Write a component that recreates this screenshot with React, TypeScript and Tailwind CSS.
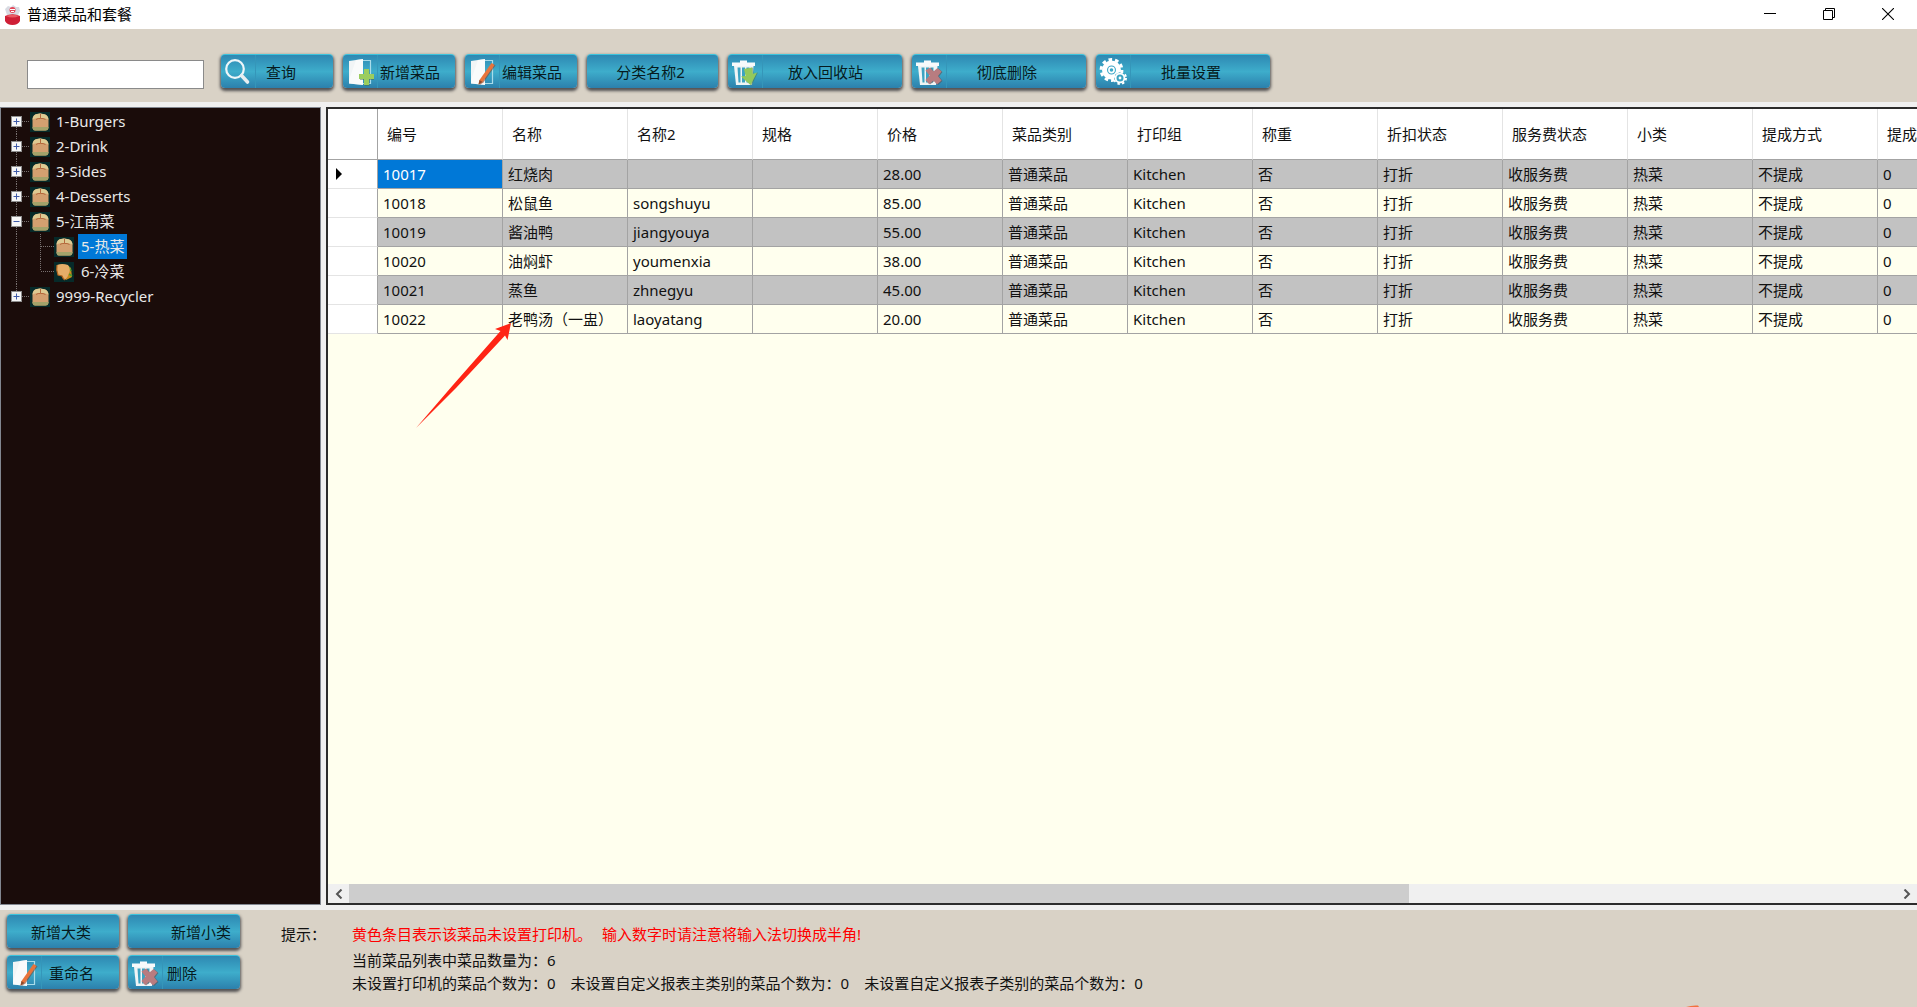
import React from "react";

type IconProps = { children?: React.ReactNode };

function Svg32({ children }: IconProps) {
  return (
    <svg viewBox="0 0 28 32" className="h-8 w-7 shrink-0" aria-hidden="true">
      {children}
    </svg>
  );
}

function SearchIcon() {
  return (
    <Svg32>
      <circle cx="11" cy="13" r="8.8" fill="none" stroke="#eef6f9" strokeWidth="2.2" />
      <path d="M17.5 19.5 L23.5 26" stroke="#e8eef1" strokeWidth="3.6" strokeLinecap="round" />
    </Svg32>
  );
}

function Page() {
  return (
    <>
      <path d="M17 4.5 H24.5 V27.5 H17" fill="none" stroke="#a9dcea" strokeWidth="1.2" />
      <path d="M3 5 L17 3 V29 L3 27.5 Z" fill="#f1f5f6" />
      <path d="M10 4 L17 3 V29 L3 27.5 V24 Z" fill="#fff" opacity=".6" />
    </>
  );
}

function AddIcon() {
  return (
    <Svg32>
      <Page />
      <path d="M18.5 14 h5 v5 h4.5 v5 h-4.5 v6 h-5 v-6 h-4.5 v-5 h4.5 Z" fill="#456e4a" opacity=".5" />
      <path d="M18 13 h5 v5 h5 v5 h-5 v6 h-5 v-6 h-5 v-5 h5 Z" fill="#9bcd5e" />
    </Svg32>
  );
}

function EditIcon() {
  return (
    <Svg32>
      <Page />
      <path d="M24.5 7.5 L27.5 9.5 L15.5 26.5 L11.5 29 L12.5 24.5 Z" fill="#7b4a35" opacity=".6" />
      <path d="M23.5 7 L26.5 9 L14.5 26 L10.5 28.5 L11.5 24 Z" fill="#e8743b" />
      <path d="M11.5 24 L14.5 26 L10.5 28.5 Z" fill="#8d4a2c" />
    </Svg32>
  );
}

function Can() {
  return (
    <>
      <path d="M1 6.5 H9 V4.5 H16 V6.5 H24 V10 H1 Z" fill="#f7fafb" />
      <path d="M3 10 H22.5 L21 29 H5 Z" fill="#f0f4f5" />
      <path d="M6.5 11.5 h3 v15 h-2 Z M11 11.5 h3 v15 h-3 Z M15.5 11.5 h3 l-.6 15 h-2.4 Z" fill="#3ca3c2" />
    </>
  );
}

function RecycleIcon() {
  return (
    <Svg32>
      <Can />
      <path d="M14 13 L22 11.5 L22.5 18 L27 16.5 L20.5 29.5 L11 21 L15.5 20.5 Z" fill="#4f7740" opacity=".5" />
      <path d="M13 13 L21 11.5 L21.5 18 L26 16.5 L19.5 29 L10 20.5 L14.5 20 Z" fill="#93c95c" />
    </Svg32>
  );
}

function DeleteIcon() {
  return (
    <Svg32>
      <Can />
      <path d="M11.5 15 l4.5-3 3.5 4 4-3.5 4 3.5-3.5 4.5 3.5 4.5-4.5 4-3.5-4-4.5 3.5-3.5-4 4-4.5 Z" fill="#5e4e52" opacity=".6" />
      <path d="M10.5 14.5 l4.5-3 3.5 4 4-3.5 4 3.5-3.5 4.5 3.5 4.5-4.5 4-3.5-4-4.5 3.5-3.5-4 4-4.5 Z" fill="#b87c80" />
    </Svg32>
  );
}

function GearsIcon() {
  return (
    <Svg32>
      <circle cx="12.5" cy="14" r="10.4" fill="none" stroke="#fff" strokeWidth="3" strokeDasharray="3.6 2.93" />
      <circle cx="12.5" cy="14" r="7" fill="none" stroke="#fff" strokeWidth="5" />
      <circle cx="12.5" cy="14" r="2.6" fill="none" stroke="#fff" strokeWidth="1.6" />
      <circle cx="21" cy="22" r="5.8" fill="#3ca3c2" />
      <circle cx="21" cy="22" r="6" fill="none" stroke="#fff" strokeWidth="2" strokeDasharray="2.4 2.31" />
      <circle cx="21" cy="22" r="4.4" fill="none" stroke="#fff" strokeWidth="1.8" />
      <circle cx="21" cy="22" r="1.4" fill="#fff" />
    </Svg32>
  );
}

function ActionButton({
  label,
  icon,
  width = "w-[112px]",
  place = "justify-center pr-1",
}: {
  label: string;
  icon?: React.ReactNode;
  width?: string;
  place?: string;
}) {
  return (
    <button
      type="button"
      className={`flex h-[34px] shrink-0 items-center rounded border-t border-[#3cc3dc] bg-linear-to-b from-[#2e88b2] via-[#3eadcb] to-[#2c80ac] leading-5 whitespace-nowrap text-[#061a20] shadow-[0_2px_3px_1px_rgba(40,40,45,0.75)] ${width} ${icon ? "" : place}`}
    >
      {icon ? (
        <>
          <span className="flex h-full w-[35px] shrink-0 items-center border-r border-[#3596b9] pl-[3px]">{icon}</span>
          <span className={place}>{label}</span>
        </>
      ) : (
        label
      )}
    </button>
  );
}

function BreadIcon() {
  return (
    <svg viewBox="0 0 20 20" className="size-5 shrink-0" aria-hidden="true">
      <rect width="20" height="20" fill="#062a29" />
      <path d="M2.500 7 Q3 2.500 7 2 Q10 .8 13 2 Q18 2.500 18.500 7 V16 Q18 18.500 15.500 18.500 H5 Q3 18.500 2.500 16 Z" fill="#d3a070" />
      <path d="M2.500 7.500 Q3 2.500 7 2 Q10 .8 13 2 Q18 2.500 18.500 7.500 Q14 5.500 10.500 6.500 Q6 5.500 2.500 7.500 Z" fill="#ddca92" />
      <path d="M10.500 2 V6.500 M6 7.500 Q8 6 10.500 6.500 Q13 6 15.500 7.500" fill="none" stroke="#b4683c" strokeWidth="1" />
      <path d="M2.500 15 H18.500 V16 Q18 18.500 15.500 18.500 H5 Q3 18.500 2.500 16 Z" fill="#a3a36a" />
    </svg>
  );
}

function SandwichIcon() {
  return (
    <svg viewBox="0 0 20 20" className="size-5 shrink-0" aria-hidden="true">
      <rect width="20" height="20" fill="#062a29" />
      <path d="M13 3 L17 6 L18 15 L12 18 Z" fill="#c98a1e" />
      <path d="M15 5 L17 9 M15 12 L18 14" stroke="#4f9a2c" strokeWidth="1.6" />
      <path d="M3 3 Q8 1 14 3 Q17 7 15 11 Q14 15 11 18 Q9 17 8 14 L4 13 Q2 8 3 3 Z" fill="#e5ad68" />
      <path d="M3 3 Q2 8 4 13 L8 14 Q9 17 11 18" fill="none" stroke="#b4651e" strokeWidth="1.2" />
    </svg>
  );
}

const DOT = { stroke: "#77706f", strokeDasharray: "1 1", strokeWidth: 1 };

function Expander({ open, first, last }: { open?: boolean; first?: boolean; last?: boolean }) {
  return (
    <svg viewBox="0 0 20 25" className="h-[25px] w-5" aria-hidden="true">
      <path d={`M6.5 ${first ? 12 : 0} V${last ? 12 : 25}`} {...DOT} />
      <path d="M12 12.5 H20" {...DOT} />
      <rect x="1.5" y="7.5" width="10" height="10" fill="#f6f6f6" stroke="#8f8f8f" />
      <path d={open ? "M3.500 12.500 H9.500" : "M3.500 12.500 H9.500 M6.500 9.500 V15.500"} stroke="#3f5aa8" />
    </svg>
  );
}

function TreeRow({ label, open, first, last }: { label: string; open?: boolean; first?: boolean; last?: boolean }) {
  return (
    <div className="flex h-[25px] items-center">
      <button type="button" aria-label={label} className="h-[25px] w-5">
        <Expander open={open} first={first} last={last} />
      </button>
      <BreadIcon />
      <span className="pl-1.5 leading-[25px]">{label}</span>
    </div>
  );
}

function ChildRow({ label, icon, selected, last }: { label: string; icon: React.ReactNode; selected?: boolean; last?: boolean }) {
  return (
    <li className="flex h-[25px] items-center">
      <svg viewBox="0 0 44 25" className="h-[25px] w-11 shrink-0" aria-hidden="true">
        <path d="M6.5 0 V25" {...DOT} />
        <path d={last ? "M30.5 0 V12" : "M30.5 0 V25"} {...DOT} />
        <path d="M31 12.5 H44" {...DOT} />
      </svg>
      {icon}
      <span className={selected ? "ml-1 bg-[#0078d7] px-[3px] leading-[25px]" : "ml-1 px-[3px] leading-[25px]"}>{label}</span>
    </li>
  );
}

const HEADERS = ["编号", "名称", "名称2", "规格", "价格", "菜品类别", "打印组", "称重", "折扣状态", "服务费状态", "小类", "提成方式", "提成"];

const DISHES = [
  ["10017", "红烧肉", "", "28.00"],
  ["10018", "松鼠鱼", "songshuyu", "85.00"],
  ["10019", "酱油鸭", "jiangyouya", "55.00"],
  ["10020", "油焖虾", "youmenxia", "38.00"],
  ["10021", "蒸鱼", "zhnegyu", "45.00"],
  ["10022", "老鸭汤（一盅）", "laoyatang", "20.00"],
];

const COMMON = ["普通菜品", "Kitchen", "否", "打折", "收服务费", "热菜", "不提成", "0"];

function DishTable() {
  return (
    <table className="w-[1675px] table-fixed border-separate border-spacing-0 text-left">
      <colgroup>
        <col className="w-[50px]" />
        {HEADERS.map((h) => (
          <col key={h} className="w-[125px]" />
        ))}
      </colgroup>
      <thead>
        <tr className="h-[51px] bg-white">
          <td className="border-r border-b border-[#a3a3a3]" />
          {HEADERS.map((h) => (
            <th key={h} scope="col" className="border-r border-b border-r-[#e4e4e4] border-b-[#a3a3a3] pl-[9px] font-normal whitespace-nowrap">
              {h}
            </th>
          ))}
        </tr>
      </thead>
      <tbody>
        {DISHES.map((dish, r) => (
          <tr key={dish[0]} className={r % 2 ? "h-[29px] bg-[#ffffee]" : "h-[29px] bg-[#c2c2c2]"}>
            <td className="border-r border-b border-r-[#a3a3a3] border-b-[#e4e4e4] bg-white pl-2">
              {r === 0 && (
                <svg viewBox="0 0 6 12" className="h-3 w-1.5" aria-hidden="true">
                  <path d="M0 0 L6 6 L0 12 Z" fill="#000" />
                </svg>
              )}
            </td>
            {[dish[0], dish[1], dish[2], "", dish[3], ...COMMON].map((text, c) => (
              <td
                key={c}
                className={`border-r border-b border-[#a3a3a3] pl-[5px] leading-5 whitespace-nowrap ${r === 0 && c === 0 ? "bg-[#0078d7] text-white" : ""}`}
              >
                {text}
              </td>
            ))}
          </tr>
        ))}
      </tbody>
    </table>
  );
}

function TitleBar() {
  return (
    <header className="flex h-[29px] shrink-0 items-center bg-white pl-1 text-black">
      <svg viewBox="0 0 17 20" className="h-5 w-[17px]" aria-hidden="true">
        <path d="M1 4 L4 1 L7 2 L9 0 L12 2 L15 2 L16 6 L14 10 H3 Z" fill="#d9dbe3" />
        <circle cx="8.5" cy="5" r="3" fill="#e5475a" />
        <path d="M6 4.500 h5 M7 6.500 h3" stroke="#fff" strokeWidth="1" />
        <path d="M1 11 Q8.5 7.500 16 11 V16 Q14 20 8.500 20 Q3 20 1 16 Z" fill="#cf1f36" />
        <path d="M2 11 Q8.500 8.500 15 11 Q8.500 14 2 11 Z" fill="#ea5a64" />
      </svg>
      <h1 className="pb-0.5 pl-1.5 leading-5">普通菜品和套餐</h1>
      <div className="ml-auto flex h-full pb-px">
        <button type="button" aria-label="最小化" className="flex w-[59px] items-center justify-center">
          <svg viewBox="0 0 12 12" className="size-3"><path d="M0 5.500 H12" stroke="#000" /></svg>
        </button>
        <button type="button" aria-label="还原" className="flex w-[59px] items-center justify-center">
          <svg viewBox="0 0 12 12" className="size-3">
            <path d="M.5 2.500 H9.500 V11.500 H.5 Z M2.500 2.500 V.5 H11.500 V9.500 H9.500" fill="none" stroke="#000" />
          </svg>
        </button>
        <button type="button" aria-label="关闭" className="flex w-[59px] items-center justify-center">
          <svg viewBox="0 0 12 12" className="size-3"><path d="M0 0 L12 12 M12 0 L0 12" stroke="#000" strokeWidth="1.1" /></svg>
        </button>
      </div>
    </header>
  );
}

export default function App() {
  return (
    <div className="relative flex h-screen flex-col overflow-hidden bg-[#f0f0f0] font-['Noto_Sans','Noto_Sans_CJK_SC',sans-serif] text-[15px] text-[#111]">
      <TitleBar />

      <div className="flex h-[73px] shrink-0 items-start gap-2.5 bg-[#d9d2c6] pt-[25px] pl-[27px]">
        <input type="text" aria-label="查询" className="mt-1.5 mr-[7px] h-[29px] w-[177px] border border-[#8a8a8a] bg-white px-1 outline-none" />
        <ActionButton label="查询" icon={<SearchIcon />} place="pl-2.5" />
        <ActionButton label="新增菜品" icon={<AddIcon />} place="pl-0.5" />
        <ActionButton label="编辑菜品" icon={<EditIcon />} place="pl-0.5" />
        <ActionButton label="分类名称2" width="w-[131px]" />
        <ActionButton label="放入回收站" icon={<RecycleIcon />} width="w-[174px]" place="pl-[25px]" />
        <ActionButton label="彻底删除" icon={<DeleteIcon />} width="w-[174px]" place="pl-[30px]" />
        <ActionButton label="批量设置" icon={<GearsIcon />} width="w-[174px]" place="pl-[30px]" />
      </div>

      <main className="flex min-h-0 flex-1 gap-[5px] py-[5px]">
        <nav className="w-[321px] shrink-0 border border-[#828790] bg-[#1a0c0a] pt-px pl-[9px] text-[#e8e8e8]">
          <ul>
            <li><TreeRow label="1-Burgers" first /></li>
            <li><TreeRow label="2-Drink" /></li>
            <li><TreeRow label="3-Sides" /></li>
            <li><TreeRow label="4-Desserts" /></li>
            <li>
              <TreeRow label="5-江南菜" open />
              <ul>
                <ChildRow label="5-热菜" icon={<BreadIcon />} selected />
                <ChildRow label="6-冷菜" icon={<SandwichIcon />} last />
              </ul>
            </li>
            <li><TreeRow label="9999-Recycler" last /></li>
          </ul>
        </nav>

        <section className="flex min-w-0 flex-1 flex-col border-t-2 border-b-2 border-l-2 border-[#2c2c2c] bg-[#ffffee]">
          <div className="min-h-0 flex-1 overflow-hidden">
            <DishTable />
          </div>
          <div className="flex h-[19px] shrink-0 items-stretch bg-[#f0f0f0]">
            <button type="button" aria-label="向左" className="flex w-[21px] items-center justify-center">
              <svg viewBox="0 0 8 10" className="h-2.5 w-2"><path d="M6.500 .5 L2 5 L6.500 9.500" fill="none" stroke="#555" strokeWidth="2" /></svg>
            </button>
            <div className="flex-1">
              <div className="h-full w-[68.5%] bg-[#cdcdcd]" />
            </div>
            <button type="button" aria-label="向右" className="flex w-[21px] items-center justify-center">
              <svg viewBox="0 0 8 10" className="h-2.5 w-2"><path d="M1.500 .5 L6 5 L1.500 9.500" fill="none" stroke="#555" strokeWidth="2" /></svg>
            </button>
          </div>
        </section>
      </main>

      <footer className="flex h-[97px] shrink-0 bg-[#d9d2c6] pl-[7px]">
        <div className="grid grid-cols-[112px_112px] content-start gap-x-[9px] gap-y-[7px] pt-1">
          <ActionButton label="新增大类" />
          <ActionButton label="新增小类" place="justify-end pr-[9px]" />
          <ActionButton label="重命名" icon={<EditIcon />} place="pl-[7px]" />
          <ActionButton label="删除" icon={<DeleteIcon />} place="pl-1" />
        </div>
        <p className="ml-[41px] w-[71px] pt-3.5 leading-5">提示：</p>
        <div className="pt-3.5 leading-[23px] whitespace-nowrap">
          <p className="flex gap-2.5 pb-[5px] leading-5 text-[#ff0000]">
            <span>黄色条目表示该菜品未设置打印机。</span>
            <span>输入数字时请注意将输入法切换成半角!</span>
          </p>
          <p>当前菜品列表中菜品数量为：6</p>
          <p className="flex gap-[15px]">
            <span>未设置打印机的菜品个数为：0</span>
            <span>未设置自定义报表主类别的菜品个数为：0</span>
            <span>未设置自定义报表子类别的菜品个数为：0</span>
          </p>
        </div>
      </footer>

      <svg viewBox="0 0 96 106" className="pointer-events-none absolute top-[323px] left-[416px] h-[106px] w-24" aria-hidden="true">
        <path d="M95 0 L91.500 17 L89 12.500 L40 65 L0 105 L37 62 L84.500 8 L79 6 Z" fill="#ff2414" />
      </svg>
      <svg viewBox="0 0 13 2" className="pointer-events-none absolute bottom-0 left-[1686px] h-0.5 w-[13px]" aria-hidden="true">
        <path d="M0 2 Q6 0 12 .5 L13 2 Z" fill="#f2713f" />
      </svg>
    </div>
  );
}
